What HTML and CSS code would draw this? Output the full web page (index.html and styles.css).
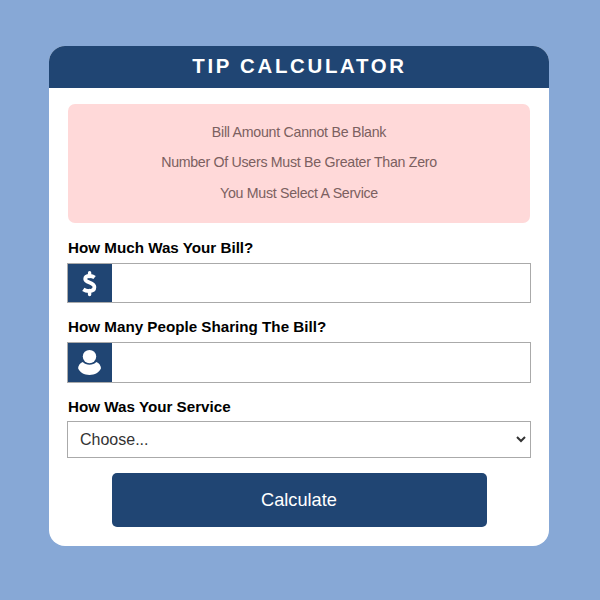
FILE: index.html
```html
<!DOCTYPE html>
<html lang="en">
<head>
<meta charset="utf-8">
<title>Tip Calculator</title>
<link rel="stylesheet" href="styles.css">
</head>
<body>
<main class="card">
  <h1 class="title">TIP CALCULATOR</h1>
  <form class="form">
    <div class="errors">
      <p class="error-bill">Bill Amount Cannot Be Blank</p>
      <p>Number Of Users Must Be Greater Than Zero</p>
      <p>You Must Select A Service</p>
    </div>
    <label class="label" for="bill">How Much Was Your Bill?</label>
    <div class="field field-bill">
      <span class="icon">
        <svg width="44" height="38" viewBox="0 0 44 38" fill="none" stroke="#fff">
          <path d="M26.6 13.6C25.2 12.5 23.6 12 21.8 12C19 12 17.2 13 17.2 15C17.2 19 26.4 18.2 26.4 23.1C26.4 25.9 24 27.1 21 27.1C18.8 27.1 16.8 26.5 15.3 25.4" stroke-width="3.8"/>
          <path d="M21.6 8.8V12.5M21.6 26.5V30.6" stroke-width="3.4" stroke-linecap="round"/>
        </svg>
      </span>
      <input class="input" id="bill" type="text">
    </div>
    <label class="label" for="people">How Many People Sharing The Bill?</label>
    <div class="field field-people">
      <span class="icon">
        <svg width="44" height="39" viewBox="0 0 44 39" fill="#fff">
          <circle cx="21.5" cy="13.6" r="6.7"/>
          <path d="M14.8 19C12 20.2 10.1 22.7 10.1 25.3C11.8 29.5 16.2 32 21.5 32S31.3 29.5 33 25.3C33 22.7 31.1 20.2 28.3 19C26.6 20.8 24.2 21.7 21.5 21.7S16.5 20.8 14.8 19Z"/>
        </svg>
      </span>
      <input class="input" id="people" type="text">
    </div>
    <label class="label" for="service">How Was Your Service</label>
    <div class="select-wrap">
      <select class="select" id="service">
        <option>Choose...</option>
      </select>
    </div>
    <button class="button" type="button">Calculate</button>
  </form>
</main>
</body>
</html>
```
FILE: styles.css
```css
* {
  box-sizing: border-box;
}

body {
  margin: 0;
  height: 600px;
  padding: 46px 0 0 49px;
  background: #87a8d6;
  font-family: "Liberation Sans", Arial, sans-serif;
}

.card {
  width: 500px;
  height: 500px;
  background: #fff;
  border-radius: 16px;
  overflow: hidden;
}

.title {
  margin: 0;
  height: 42px;
  padding-left: 1px;
  background: #204573;
  color: #fff;
  font-size: 20.4px;
  line-height: 40px;
  letter-spacing: 2.7px;
  text-align: center;
}

.form {
  display: flex;
  flex-direction: column;
  padding: 16px 18px 0;
}

.errors {
  height: 119px;
  margin: 0 1px 15px;
  padding-top: 13px;
  background: #ffd9d9;
  border-radius: 7px;
  color: #7b6060;
  font-size: 14.2px;
  letter-spacing: -0.29px;
  text-align: center;
}

.errors p {
  margin: 0;
  line-height: 30.4px;
}

.errors .error-bill {
  letter-spacing: -0.26px;
}

.label {
  height: 25px;
  padding-left: 1px;
  font-size: 15.2px;
  font-weight: bold;
  line-height: 20px;
}

.field {
  display: flex;
  border: 1px solid #aaa;
}

.field-bill {
  height: 40px;
  margin-bottom: 14px;
}

.field-people {
  height: 41px;
  margin-bottom: 14px;
}

.icon {
  width: 44px;
  background: #204573;
  overflow: hidden;
}

.icon svg {
  display: block;
}

.input {
  flex: 1;
  min-width: 0;
  border: 0;
  padding: 0 10px;
  font: inherit;
  outline: none;
}

.select-wrap {
  height: 37px;
  margin-top: -1px;
  padding-right: 1px;
  border: 1px solid #aaa;
}

.select {
  display: block;
  width: 100%;
  height: 35px;
  padding: 0 8px;
  background: #fff;
  border: 0;
  border-radius: 0;
  color: #333;
  font: 16px "Liberation Sans", Arial, sans-serif;
}

.button {
  align-self: center;
  width: 375px;
  height: 54px;
  margin-top: 15px;
  background: #204573;
  border: 0;
  border-radius: 5px;
  color: #fff;
  font: 18.2px "Liberation Sans", Arial, sans-serif;
}
```
